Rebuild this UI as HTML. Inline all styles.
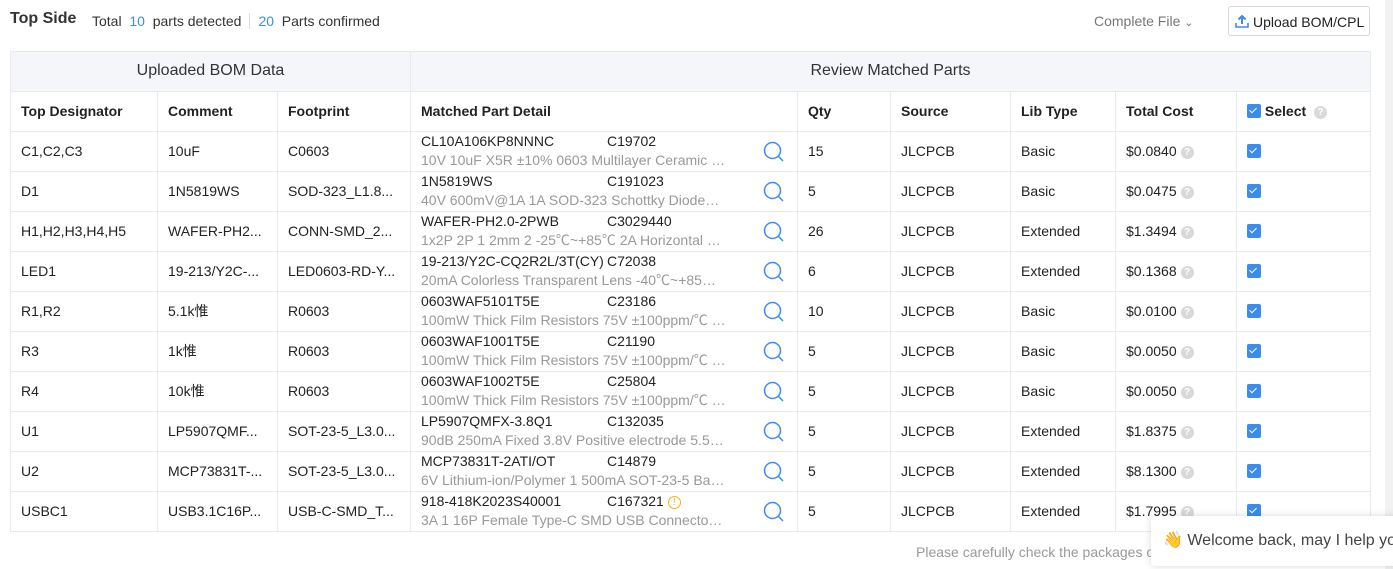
<!DOCTYPE html>
<html><head><meta charset="utf-8"><style>
*{box-sizing:border-box;margin:0;padding:0}
body{width:1393px;height:569px;overflow:hidden;background:#fff;font-family:"Liberation Sans","Noto Sans CJK SC",sans-serif;color:#222;font-size:14px;position:relative}
.top{position:absolute;left:10px;top:10px;font-size:16px;font-weight:bold;color:#333}
.stat{position:absolute;left:92px;top:13px;font-size:14px;color:#333}
.b{color:#3b8cf0}
.sep{display:inline-block;width:1px;height:16px;background:#ddd;vertical-align:-3px;margin:0 8px 0 8px}
.cf{position:absolute;left:1094px;top:13px;color:#777;font-size:14px}
.up{position:absolute;left:1228px;top:6px;width:142px;height:30px;border:1px solid #d8d8d8;border-radius:3px;font-size:14px;color:#222;padding:7px 0 0 24px}
table{position:absolute;left:10px;top:51px;border-collapse:collapse;table-layout:fixed}
td,th{border:1px solid #e8eaef;height:40px;padding:0 10px 2px;line-height:18px;text-align:left;font-weight:normal;white-space:nowrap;overflow:hidden}
tr.g th{background:#f5f6fa;text-align:center;font-size:16px;color:#333}
tr.h th{font-weight:bold;color:#222}
td.m{line-height:19px;font-size:14px;position:relative;padding:0 10px}
.m span.c{position:absolute;left:196px;top:0px}
.m div.d{color:#999;width:305px;overflow:hidden;text-overflow:ellipsis}
.m div.t{margin-top:-1px}
.mag{position:absolute;right:12px;top:9px}
.q{display:inline-block;width:13px;height:13px;border-radius:50%;background:#d9d9d9;color:#fff;font-size:10px;text-align:center;line-height:13px;vertical-align:1px;margin-left:4px;font-weight:bold}
.cb{display:inline-block;width:14px;height:14px;background:#3b8cf0;border-radius:2px;vertical-align:-2px;position:relative}
.cb:after{content:"";position:absolute;left:4px;top:2px;width:3px;height:6px;border:solid #fff;border-width:0 1.5px 1.5px 0;transform:rotate(45deg)}
.foot{position:absolute;left:916px;top:544px;color:#999;font-size:14px}
.chat{position:absolute;left:1151px;top:516px;width:270px;height:50px;background:#fff;box-shadow:0 0 8px rgba(0,0,0,.15);border-radius:4px;font-size:16px;color:#444;padding:14px 0 0 12px;white-space:nowrap}
.sb{position:absolute;left:1385px;top:0;width:8px;height:569px;background:#f2f2f2}
</style></head><body>
<div class="sb"></div>
<div class="top">Top Side</div>
<div class="stat">Total &nbsp;<span class="b">10</span>&nbsp; parts detected<span class="sep"></span><span class="b">20</span>&nbsp; Parts confirmed</div>
<div class="cf">Complete File <span style="font-size:11px">&#8964;</span></div>
<div class="up"><svg style="position:absolute;left:6px;top:7px" width="14" height="14" viewBox="0 0 14 14"><path d="M7 10V2M3.5 5.5L7 2l3.5 3.5" stroke="#3b8cf0" stroke-width="2" fill="none"/><path d="M1 9v4h12V9" stroke="#3b8cf0" stroke-width="1.6" fill="none"/></svg>Upload BOM/CPL</div>
<table>
<colgroup><col style="width:147px"><col style="width:120px"><col style="width:133px"><col style="width:387px"><col style="width:93px"><col style="width:120px"><col style="width:105px"><col style="width:121px"><col style="width:134px"></colgroup>
<tr class="g"><th colspan="3">Uploaded BOM Data</th><th colspan="6">Review Matched Parts</th></tr>
<tr class="h"><th>Top Designator</th><th>Comment</th><th>Footprint</th><th>Matched Part Detail</th><th>Qty</th><th>Source</th><th>Lib Type</th><th>Total Cost</th><th><span class="cb"></span> Select <span class="q">?</span></th></tr>
<tbody id="b">
</tbody></table>
<script>
var R=[["C1,C2,C3","10uF","C0603","CL10A106KP8NNNC","C19702","10V 10uF X5R ±10% 0603 Multilayer Ceramic Capacitors","15","Basic","$0.0840"],
["D1","1N5819WS","SOD-323_L1.8...","1N5819WS","C191023","40V 600mV@1A 1A SOD-323 Schottky Diodes ROHS","5","Basic","$0.0475"],
["H1,H2,H3,H4,H5","WAFER-PH2...","CONN-SMD_2...","WAFER-PH2.0-2PWB","C3029440","1x2P 2P 1 2mm 2 -25℃~+85℃ 2A Horizontal attachment","26","Extended","$1.3494"],
["LED1","19-213/Y2C-...","LED0603-RD-Y...","19-213/Y2C-CQ2R2L/3T(CY)","C72038","20mA Colorless Transparent Lens -40℃~+85℃ yellow","6","Extended","$0.1368"],
["R1,R2","5.1k惟","R0603","0603WAF5101T5E","C23186","100mW Thick Film Resistors 75V ±100ppm/℃ ±1%","10","Basic","$0.0100"],
["R3","1k惟","R0603","0603WAF1001T5E","C21190","100mW Thick Film Resistors 75V ±100ppm/℃ ±1%","5","Basic","$0.0050"],
["R4","10k惟","R0603","0603WAF1002T5E","C25804","100mW Thick Film Resistors 75V ±100ppm/℃ ±1%","5","Basic","$0.0050"],
["U1","LP5907QMF...","SOT-23-5_L3.0...","LP5907QMFX-3.8Q1","C132035","90dB 250mA Fixed 3.8V Positive electrode 5.5V SOT-23-5 LDO","5","Extended","$1.8375"],
["U2","MCP73831T-...","SOT-23-5_L3.0...","MCP73831T-2ATI/OT","C14879","6V Lithium-ion/Polymer 1 500mA SOT-23-5 Battery","5","Extended","$8.1300"],
["USBC1","USB3.1C16P...","USB-C-SMD_T...","918-418K2023S40001","C167321","3A 1 16P Female Type-C SMD USB Connectors ROHS","5","Extended","$1.7995"]];
var h="";R.forEach(function(r,i){var w=i==9?' <span style="display:inline-block;width:13px;height:13px;border:1px solid #f5b400;border-radius:50%;color:#f5b400;font-size:10px;line-height:11px;text-align:center;vertical-align:1px">!</span>':'';
h+='<tr><td>'+r[0]+'</td><td>'+r[1]+'</td><td>'+r[2]+'</td><td class="m"><div class="t">'+r[3]+'</div><span class="c">'+r[4]+w+'</span><div class="d">'+r[5]+'</div><svg class="mag" width="22" height="22" viewBox="0 0 22 22"><circle cx="9.5" cy="9.5" r="8" stroke="#3b8cf0" stroke-width="1.5" fill="none"/><path d="M15.5 15.5L20 20" stroke="#3b8cf0" stroke-width="1.5"/></svg></td><td>'+r[6]+'</td><td>JLCPCB</td><td>'+r[7]+'</td><td>'+r[8]+'<span class="q">?</span></td><td><span class="cb"></span></td></tr>';});
document.getElementById("b").innerHTML=h;
</script>
<div class="foot">Please carefully check the packages of all parts</div>
<div class="chat">👋 Welcome back, may I help you?</div>
</body></html>
